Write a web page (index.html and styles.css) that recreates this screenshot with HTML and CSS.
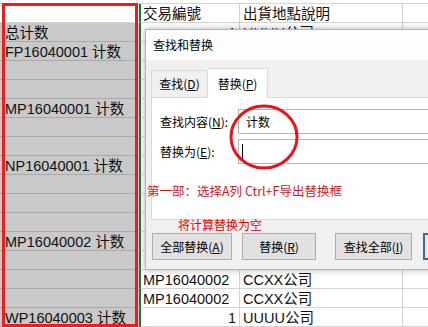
FILE: index.html
```html
<!DOCTYPE html>
<html lang="zh">
<head>
<meta charset="utf-8">
<title>查找和替换</title>
<link rel="stylesheet" href="styles.css">
</head>
<body>
<div class="sheet">
  <div class="row"><div class="cell a active"></div><div class="cell b">交易編號</div><div class="cell c">出貨地點說明</div><div class="cell d"></div></div>
  <div class="row"><div class="cell a">总计数</div><div class="cell b num">1</div><div class="cell c">UUUU公司</div><div class="cell d"></div></div>
  <div class="row"><div class="cell a">FP16040001 计数</div><div class="cell b"></div><div class="cell c"></div><div class="cell d"></div></div>
  <div class="row"><div class="cell a"></div><div class="cell b"></div><div class="cell c"></div><div class="cell d"></div></div>
  <div class="row"><div class="cell a"></div><div class="cell b"></div><div class="cell c"></div><div class="cell d"></div></div>
  <div class="row"><div class="cell a">MP16040001 计数</div><div class="cell b"></div><div class="cell c"></div><div class="cell d"></div></div>
  <div class="row"><div class="cell a"></div><div class="cell b"></div><div class="cell c"></div><div class="cell d"></div></div>
  <div class="row"><div class="cell a"></div><div class="cell b"></div><div class="cell c"></div><div class="cell d"></div></div>
  <div class="row"><div class="cell a">NP16040001 计数</div><div class="cell b"></div><div class="cell c"></div><div class="cell d"></div></div>
  <div class="row"><div class="cell a"></div><div class="cell b"></div><div class="cell c"></div><div class="cell d"></div></div>
  <div class="row"><div class="cell a"></div><div class="cell b"></div><div class="cell c"></div><div class="cell d"></div></div>
  <div class="row"><div class="cell a"></div><div class="cell b"></div><div class="cell c"></div><div class="cell d"></div></div>
  <div class="row"><div class="cell a">MP16040002 计数</div><div class="cell b"></div><div class="cell c"></div><div class="cell d"></div></div>
  <div class="row"><div class="cell a"></div><div class="cell b"></div><div class="cell c"></div><div class="cell d"></div></div>
  <div class="row"><div class="cell a"></div><div class="cell b">MP16040002</div><div class="cell c">CCXX公司</div><div class="cell d"></div></div>
  <div class="row"><div class="cell a"></div><div class="cell b">MP16040002</div><div class="cell c">CCXX公司</div><div class="cell d"></div></div>
  <div class="row"><div class="cell a">WP16040003 计数</div><div class="cell b num">1</div><div class="cell c">UUUU公司</div><div class="cell d"></div></div>
</div>

<div class="selbox"></div>

<div class="dialog">
  <div class="titlebar">查找和替换</div>
  <div class="dbody">
    <div class="tabs">
      <div class="tab">查找(<u>D</u>)</div>
      <div class="tab sel">替换(<u>P</u>)</div>
    </div>
    <div class="panel">
      <div class="field">
        <div class="label">查找内容(<u>N</u>):</div>
        <div class="input">计数</div>
      </div>
      <div class="field">
        <div class="label">替换为(<u>E</u>):</div>
        <div class="input"><span class="caret"></span></div>
      </div>
    </div>
    <div class="btns">
      <div class="btn b1">全部替换(<u>A</u>)</div>
      <div class="btn b2">替换(<u>R</u>)</div>
      <div class="btn b3">查找全部(<u>I</u>)</div>
      <div class="btn b4"></div>
    </div>
  </div>
</div>

<svg class="circle" width="70" height="66" viewBox="0 0 70 66">
  <ellipse cx="35" cy="33" rx="33" ry="31" fill="none" stroke="#e8141b" stroke-width="3"/>
</svg>

<div class="note note1">第一部：选择A列 Ctrl+F导出替换框</div>
<div class="note note2">将计算替换为空</div>
</body>
</html>
```

FILE: styles.css
```css
html, body {
  margin: 0;
  padding: 0;
  width: 428px;
  height: 327px;
  overflow: hidden;
  background: #fff;
}

body {
  position: relative;
  font-family: "Liberation Sans", "Noto Sans CJK SC", sans-serif;
}

.sheet {
  margin-top: 3px;
  border-top: 1px solid #d4d4d4;
}

.row {
  display: grid;
  grid-template-columns: 141px 99px 163px 1fr;
  height: 19px;
}

.cell {
  height: 19px;
  box-sizing: border-box;
  border-bottom: 1px solid #d4d4d4;
  border-right: 1px solid #d4d4d4;
  font-size: 14.5px;
  line-height: 18px;
  padding-top: 1px;
  white-space: nowrap;
  overflow: hidden;
  color: #111;
}

.a {
  background: #c9c9c9;
  border-bottom-color: #a9a9a9;
  border-right: 2px solid #217346;
  padding-left: 5px;
}

.a.active {
  background: #fff;
  border-bottom-color: #d4d4d4;
}

.b { padding-left: 2px; }
.c { padding-left: 3px; }
.d { border-right: none; }

.num {
  text-align: right;
  padding-right: 3px;
}

.selbox {
  position: absolute;
  left: 2px;
  top: 3px;
  width: 136px;
  height: 324px;
  box-sizing: border-box;
  border: 3px solid #ee1c1c;
}

.dialog {
  position: absolute;
  left: 145px;
  top: 29px;
  width: 320px;
  height: 241px;
  box-sizing: border-box;
  border: 1px solid #a9b6c6;
  background: #f0f0f0;
  box-shadow: 0 0 7px rgba(0, 0, 0, 0.3);
  font-family: "Noto Sans CJK SC", "Liberation Sans", sans-serif;
  font-size: 12px;
  color: #000;
  display: flex;
  flex-direction: column;
}

.titlebar {
  height: 30px;
  flex: none;
  background: #fdfdfd;
  padding-left: 7px;
  display: flex;
  align-items: center;
  line-height: 14px;
}

.dbody {
  flex: 1;
  padding: 8px 0 0 5px;
}

.tabs {
  display: flex;
  align-items: flex-end;
  height: 29px;
}

.tab {
  width: 57px;
  height: 27px;
  box-sizing: border-box;
  border: 1px solid #d9d9d9;
  border-bottom: none;
  background: #f0f0f0;
  display: flex;
  align-items: center;
  justify-content: center;
  line-height: 14px;
}

.tab.sel {
  width: 60px;
  height: 30px;
  margin-bottom: -1px;
  border-left: none;
  background: #fff;
  position: relative;
  z-index: 1;
}

.panel {
  height: 123px;
  box-sizing: border-box;
  background: #fff;
  border: 1px solid #d9d9d9;
  border-right: none;
  padding: 11px 0 0 8px;
}

.field {
  display: flex;
  align-items: center;
  height: 25px;
}

.field + .field {
  margin-top: 5px;
}

.label {
  width: 78px;
  flex: none;
  line-height: 14px;
}

.input {
  flex: 1;
  height: 25px;
  box-sizing: border-box;
  border: 1px solid #b4b4b4;
  background: #fff;
  padding-left: 7px;
  display: flex;
  align-items: center;
  line-height: 14px;
}

.caret {
  display: block;
  width: 1px;
  height: 15px;
  margin-left: -4px;
  background: #000;
}

.btns {
  display: flex;
  margin-top: 13px;
  padding-left: 1px;
}

.btn {
  height: 27px;
  flex: none;
  box-sizing: border-box;
  border: 1px solid #adadad;
  background: #e1e1e1;
  display: flex;
  align-items: center;
  justify-content: center;
  line-height: 14px;
  white-space: nowrap;
  overflow: hidden;
}

.b1 { width: 80px; }
.b2 { width: 74px; margin-left: 10px; }
.b3 { width: 77px; margin-left: 19px; }
.b4 {
  width: 80px;
  margin-left: 11px;
  border: 2px solid #3b6998;
  background: #e8e4e0;
}

.circle {
  position: absolute;
  left: 229px;
  top: 104px;
}

.note {
  position: absolute;
  font-family: "Noto Sans CJK SC", "Liberation Sans", sans-serif;
  white-space: nowrap;
  line-height: 16px;
}

.note1 {
  left: 147px;
  top: 183px;
  font-size: 12.5px;
  color: #cf1a1a;
}

.note2 {
  left: 178px;
  top: 217px;
  font-size: 12px;
  color: #e80000;
}
```
